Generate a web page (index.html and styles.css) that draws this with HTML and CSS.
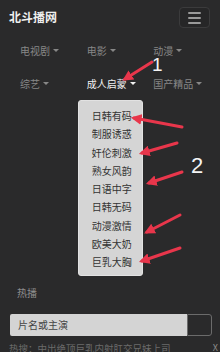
FILE: index.html
```html
<!DOCTYPE html>
<html lang="zh">
<head>
<meta charset="utf-8">
<link rel="stylesheet" href="styles.css">
</head>
<body>
<div class="page">
  <header class="top">
    <div class="brand">北斗播网</div>
    <button class="burger"><span></span><span></span><span></span></button>
  </header>
  <nav class="nav">
    <div class="item">电视剧<i class="caret"></i></div>
    <div class="item">电影<i class="caret"></i></div>
    <div class="item">动漫<i class="caret"></i></div>
    <div class="item">综艺<i class="caret"></i></div>
    <div class="item active">成人启蒙<i class="caret"></i></div>
    <div class="item">国产精品<i class="caret"></i></div>
    <ul class="menu">
      <li>日韩有码</li>
      <li>制服诱惑</li>
      <li>奸伦刺激</li>
      <li>熟女风韵</li>
      <li>日语中字</li>
      <li>日韩无码</li>
      <li>动漫激情</li>
      <li>欧美大奶</li>
      <li>巨乳大胸</li>
    </ul>
  </nav>
  <div class="hot">热播</div>
  <div class="search">
    <div class="field">片名或主演</div>
    <div class="go"></div>
  </div>
  <div class="hotsearch"><span>热搜：中出绝顶巨乳内射肛交兄妹上司</span><span class="x">X</span></div>

  <svg class="notes" width="220" height="352" viewBox="0 0 220 352">
    <defs>
      <marker id="ah" viewBox="0 0 10 10" refX="7" refY="5" markerWidth="3.6" markerHeight="3.6" orient="auto">
        <path d="M0,0 L10,5 L0,10 z" fill="#e8364b"/>
      </marker>
    </defs>
    <g stroke="#e8364b" stroke-width="3" stroke-linecap="round" fill="none" marker-end="url(#ah)">
      <line x1="152" y1="62" x2="125" y2="79"/>
      <line x1="182" y1="127" x2="134" y2="118"/>
      <line x1="177" y1="143" x2="142" y2="153"/>
      <line x1="182" y1="172" x2="149" y2="183"/>
      <line x1="180" y1="215" x2="147" y2="232"/>
      <line x1="180" y1="248" x2="142" y2="261"/>
    </g>
    <text x="152" y="71" class="num1">1</text>
    <text x="191" y="173" class="num2">2</text>
  </svg>
</div>
</body>
</html>
```

FILE: styles.css
```css
* { box-sizing: border-box; margin: 0; padding: 0; }
html, body { background: #2a2a2b; }
body {
  font-family: "Noto Sans CJK SC", "Noto Sans", sans-serif;
  color: #8a8a8a;
  width: 220px;
  height: 352px;
  overflow: hidden;
}
.page { position: relative; width: 220px; height: 352px; }

.top {
  display: flex;
  align-items: center;
  justify-content: space-between;
  height: 34px;
  padding: 0 10px 0 9px;
}
.brand { color: #efefef; font-size: 12px; font-weight: 700; line-height: 1; }
.burger {
  width: 31px;
  height: 21px;
  margin-top: 1px;
  border: 1px solid #3b3b3c;
  border-radius: 4px;
  background: #262627;
  display: flex;
  flex-direction: column;
  align-items: center;
  justify-content: center;
  gap: 3px;
}
.burger span { display: block; width: 13px; height: 2px; background: #9a9a9a; border-radius: 1px; }

.nav {
  display: grid;
  grid-template-columns: repeat(3, 1fr);
  padding: 0 10px;
}
.item {
  height: 33px;
  display: flex;
  align-items: center;
  padding-left: 10px;
  font-size: 10px;
  color: #878787;
}
.item.active { color: #f2f2f2; }
.caret {
  display: inline-block;
  width: 0; height: 0;
  margin-left: 3px;
  border-top: 3px solid currentColor;
  border-left: 3px solid transparent;
  border-right: 3px solid transparent;
}
.menu {
  grid-column: 2;
  list-style: none;
  margin-left: 1px;
  width: 65px;
  height: 176px;
  padding: 6px 0;
  background: #d5d5d5;
  border: 1px solid #e2e2e2;
  border-radius: 3px;
}
.menu li {
  height: 18.3px;
  line-height: 18.3px;
  font-size: 10px;
  color: #333;
  padding-left: 13px;
}

.hot {
  font-size: 10px;
  color: #8e8e8e;
  padding: 10px 0 0 17px;
  height: 38px;
  line-height: 14px;
}
.search {
  display: flex;
  margin: 0 8px 0 10px;
  height: 22px;
}
.field {
  flex: 1;
  background: #d4d4d4;
  color: #444;
  font-size: 10px;
  line-height: 22px;
  padding-left: 8px;
  border-radius: 2px 0 0 2px;
}
.go {
  width: 25px;
  border: 1px solid #6b6b6b;
  border-radius: 0 3px 3px 0;
  background: #2a2a2b;
}
.hotsearch {
  display: flex;
  justify-content: space-between;
  padding: 5px 2px 0 9px;
  font-size: 9.5px;
  color: #6a6a6a;
  line-height: 14px;
  white-space: nowrap;
}
.hotsearch .x { color: #8a8a8a; font-size: 9px; }

.notes { position: absolute; left: 0; top: 0; pointer-events: none; }
.num1, .num2 { fill: #f4f4f4; font-family: "Liberation Sans", sans-serif; }
.num1 { font-size: 19px; }
.num2 { font-size: 22px; }
```
